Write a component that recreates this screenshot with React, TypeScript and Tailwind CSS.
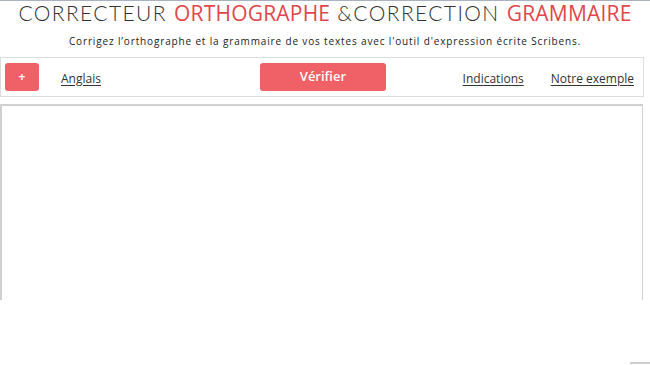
import React from 'react';

export default function App() {
    return (
        <div className="relative w-[650px] h-[365px] bg-white overflow-hidden border-t border-[#aab2c0]" style={{ fontFamily: '"Open Sans", sans-serif' }}>
            {/* Title */}
            <h1 className="-mt-[1px] text-center text-[21px] leading-[26px] text-[#333] whitespace-nowrap" style={{ fontFamily: 'Lato, "Open Sans", sans-serif' }}>
                <span className="font-light tracking-[1.4px]">CORRECTEUR </span>
                <span className="font-medium text-[#e0474c] tracking-[0.2px]" style={{ fontFamily: '"Open Sans", sans-serif' }}>ORTHOGRAPHE</span>
                <span className="font-light tracking-[1.4px]"> &amp;CORRECTION </span>
                <span className="font-medium text-[#e0474c] tracking-[0.2px]" style={{ fontFamily: '"Open Sans", sans-serif' }}>GRAMMAIRE</span>
            </h1>
            <p className="mt-[8px] text-center text-[10px] leading-[14px] tracking-[0.85px] text-[#222]">
                Corrigez l’orthographe et la grammaire de vos textes avec l'outil d'expression écrite Scribens.
            </p>

            {/* Toolbar */}
            <div className="mt-[9px] w-[644px] h-[40px] border border-[#dcdcdc] flex items-center px-[4px] text-[12px] text-[#333]">
                <button className="w-[34px] h-[28px] rounded-[3px] bg-[#f06067] text-white text-[12px] font-bold leading-none">+</button>
                <a className="ml-[22px] mt-[3px] underline underline-offset-2">Anglais</a>
                <button className="ml-[159px] w-[126px] h-[28px] rounded-[3px] bg-[#f06067] text-white text-[13px] font-semibold">Vérifier</button>
                <a className="ml-auto mt-[3px] underline underline-offset-2">Indications</a>
                <a className="ml-[27px] mr-[5px] mt-[3px] underline underline-offset-2">Notre exemple</a>
            </div>

            {/* Text area */}
            <div className="mt-[7px] w-[643px] h-[196px] border-t-2 border-l-2 border-r border-[#d0d0d0]" />

            <div className="absolute right-0 bottom-[1px] w-[20px] h-[2px] bg-[#cfcfcf]" />
        </div>
    );
}
